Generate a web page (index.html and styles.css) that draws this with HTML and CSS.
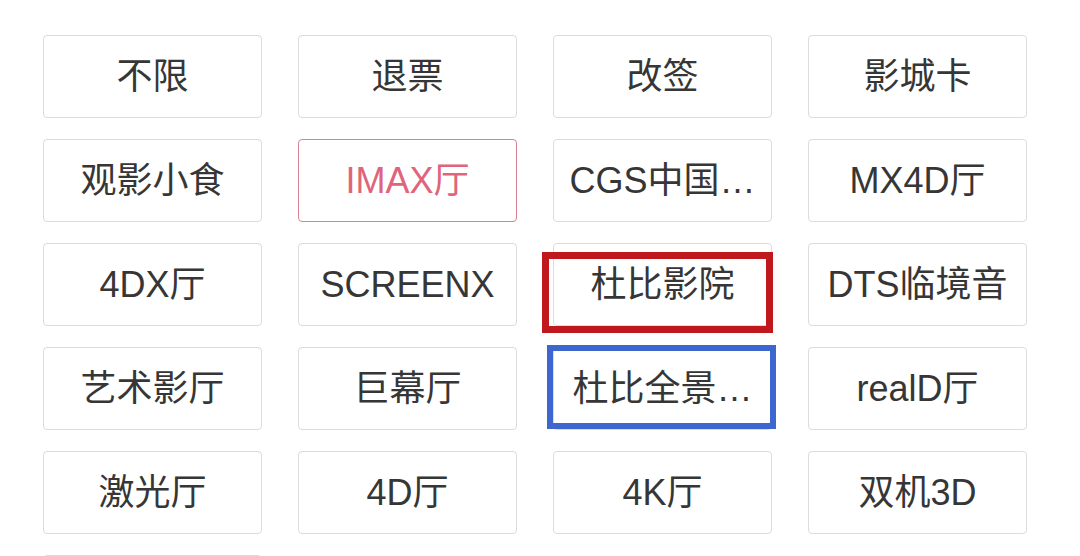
FILE: index.html
```html
<!DOCTYPE html>
<html lang="zh">
<head>
<meta charset="utf-8">
<title>筛选</title>
<link rel="stylesheet" href="styles.css">
</head>
<body>
<div class="page">
  <div class="grid">
    <div class="tag">不限</div>
    <div class="tag">退票</div>
    <div class="tag">改签</div>
    <div class="tag">影城卡</div>
    <div class="tag">观影小食</div>
    <div class="tag active">IMAX厅</div>
    <div class="tag">CGS中国…</div>
    <div class="tag">MX4D厅</div>
    <div class="tag">4DX厅</div>
    <div class="tag">SCREENX</div>
    <div class="tag">杜比影院</div>
    <div class="tag">DTS临境音</div>
    <div class="tag">艺术影厅</div>
    <div class="tag">巨幕厅</div>
    <div class="tag">杜比全景…</div>
    <div class="tag">realD厅</div>
    <div class="tag">激光厅</div>
    <div class="tag">4D厅</div>
    <div class="tag">4K厅</div>
    <div class="tag">双机3D</div>
    <div class="tag"></div>
  </div>
  <div class="mark mark-red"></div>
  <div class="mark mark-blue"></div>
</div>
</body>
</html>
```

FILE: styles.css
```css
html, body {
  margin: 0;
  padding: 0;
  background: #ffffff;
}
.page {
  position: relative;
  width: 1080px;
  height: 556px;
  overflow: hidden;
}
.grid {
  display: grid;
  grid-template-columns: repeat(4, 219px);
  grid-auto-rows: 83px;
  column-gap: 36px;
  row-gap: 21px;
  padding: 35px 0 0 43px;
}
.tag {
  box-sizing: border-box;
  border: 1px solid #dcdcdc;
  border-radius: 4px;
  background: #fff;
  color: #363636;
  font-family: "Liberation Sans", "Noto Sans CJK SC", sans-serif;
  font-size: 36px;
  line-height: 81px;
  text-align: center;
  padding: 0 8px;
  white-space: nowrap;
}
.tag.active {
  border-color: #d98394;
  color: #e0647c;
}
.mark {
  position: absolute;
  box-sizing: border-box;
}
.mark-red {
  left: 542px;
  top: 252px;
  width: 231px;
  height: 81px;
  border: 7px solid #c0191d;
}
.mark-blue {
  left: 547px;
  top: 345px;
  width: 229px;
  height: 84px;
  border: 6px solid #3d66cf;
}
```
